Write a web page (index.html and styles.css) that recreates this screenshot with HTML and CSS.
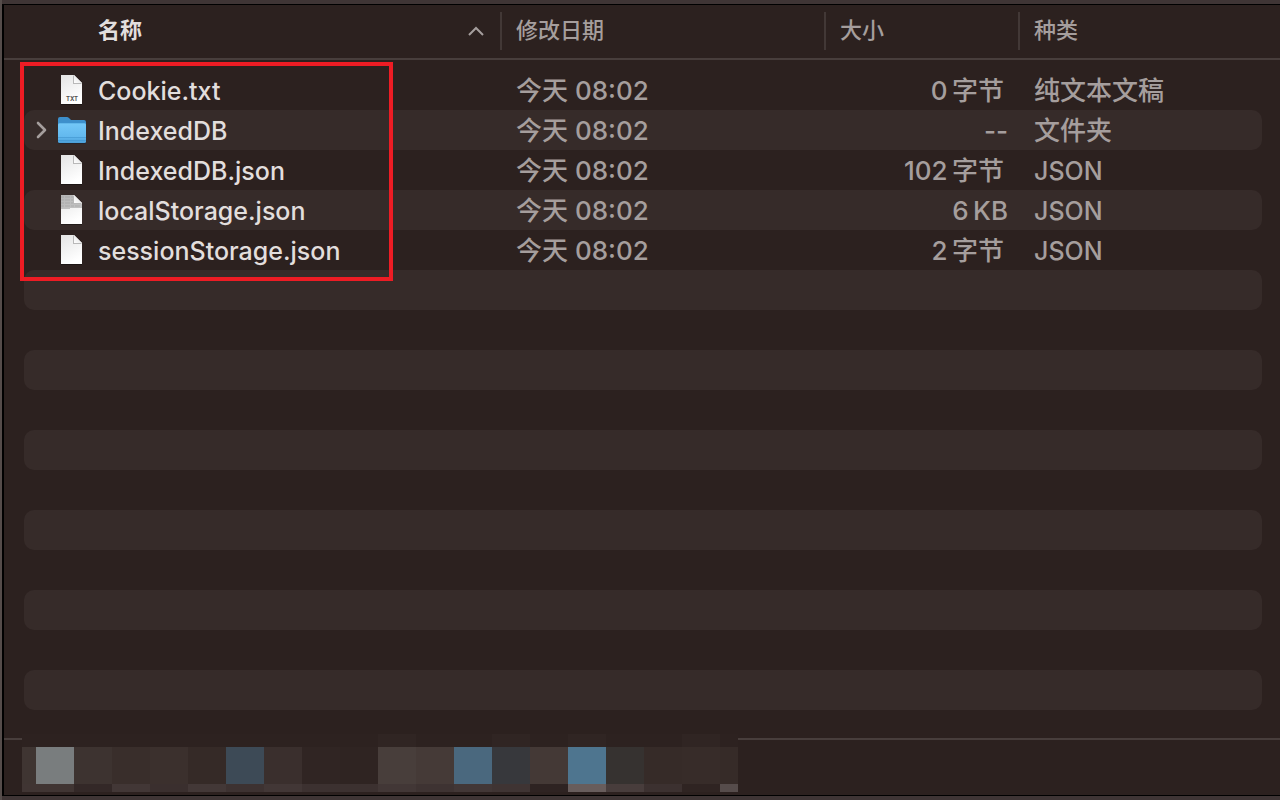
FILE: index.html
```
<!DOCTYPE html>
<html lang="zh-CN">
<head>
    <meta charset="utf-8">
    <title>IndexedDB</title>
    <link rel="stylesheet" href="styles.css">
</head>
<body>
    <svg class="defs" aria-hidden="true">
        <defs>
            <linearGradient id="paper" x1="0" y1="0" x2="0.4" y2="1">
                <stop offset="0" stop-color="#e4e4e4"/>
                <stop offset="1" stop-color="#ffffff"/>
            </linearGradient>
            <linearGradient id="fold" x1="0" y1="1" x2="1" y2="0">
                <stop offset="0" stop-color="#ffffff"/>
                <stop offset="1" stop-color="#dcdcdc"/>
            </linearGradient>
            <linearGradient id="blue" x1="0" y1="0" x2="0" y2="1">
                <stop offset="0" stop-color="#74c8f8"/>
                <stop offset="0.7" stop-color="#62b8ee"/>
                <stop offset="1" stop-color="#4a9fd8"/>
            </linearGradient>
            <symbol id="file" viewBox="0 0 28 32">
                <path d="M3 2h13l8 8v21H3z" fill="#000" opacity="0.35"/>
                <path d="M3 1h13l8 8v21H3z" fill="url(#paper)"/>
                <path d="M15 1v9h9z" fill="#b8b8b8"/>
                <path d="M16 1v8h8z" fill="url(#fold)"/>
            </symbol>
        </defs>
    </svg>
    <main class="window">
        <div class="list">
            <table>
                <thead>
                    <tr>
                        <th class="name" scope="col" aria-sort="ascending">
                            <button class="head">名称
                                <svg class="arrow" width="16" height="10" viewBox="0 0 16 10"><path d="M1 9l7-7 7 7" fill="none" stroke="#a59e9d" stroke-width="2"/></svg>
                            </button>
                        </th>
                        <th class="date" scope="col"><button class="head">修改日期</button></th>
                        <th class="size" scope="col"><button class="head">大小</button></th>
                        <th class="kind" scope="col"><button class="head">种类</button></th>
                    </tr>
                </thead>
                <tbody>
                    <tr>
                        <td><div class="item">
                            <svg class="icon" viewBox="0 0 28 32"><use href="#file"/><text x="14" y="27" text-anchor="middle" class="ext">TXT</text></svg>
                            Cookie.txt
                        </div></td>
                        <td class="date">今天 08:02</td>
                        <td class="size cjk">0&thinsp;字节</td>
                        <td class="kind">纯文本文稿</td>
                    </tr>
                    <tr>
                        <td><div class="item">
                            <button class="toggle" aria-label="展开 IndexedDB">
                                <svg width="12" height="18" viewBox="0 0 12 18"><path d="M2 2l7 7-7 7" fill="none" stroke="#a59e9d" stroke-width="2.6" stroke-linecap="round" stroke-linejoin="round"/></svg>
                            </button>
                            <svg class="icon" viewBox="0 0 28 32">
                                <rect x="0" y="6" width="28" height="24" rx="2" fill="#17202a" opacity="0.5"/>
                                <path d="M0 5q0-2 2-2h7q1 0 2 1l2 2h13q2 0 2 2v7H0z" fill="#3d8fcb"/>
                                <rect x="0" y="9" width="28" height="20" rx="1.5" fill="url(#blue)"/>
                                <path d="M0 9h28M0 23.500h28M0 26.500h28" stroke="#3f94ce" stroke-width="1" opacity="0.6"/>
                            </svg>
                            IndexedDB
                        </div></td>
                        <td class="date">今天 08:02</td>
                        <td class="size">--</td>
                        <td class="kind">文件夹</td>
                    </tr>
                    <tr>
                        <td><div class="item">
                            <svg class="icon" viewBox="0 0 28 32"><use href="#file"/></svg>
                            IndexedDB.json
                        </div></td>
                        <td class="date">今天 08:02</td>
                        <td class="size cjk">102&thinsp;字节</td>
                        <td class="kind latin">JSON</td>
                    </tr>
                    <tr>
                        <td><div class="item">
                            <svg class="icon" viewBox="0 0 28 32">
                                <use href="#file"/>
                                <path d="M3 1h12v9h9v4H12v1H3z" fill="#8d8d8d" opacity="0.5"/>
                                <path d="M3 3h12M3 6h12M3 9h12M3 12h19" stroke="#777" stroke-width="1" stroke-dasharray="3 1 5 1" opacity="0.25"/>
                            </svg>
                            localStorage.json
                        </div></td>
                        <td class="date">今天 08:02</td>
                        <td class="size">6&thinsp;KB</td>
                        <td class="kind latin">JSON</td>
                    </tr>
                    <tr>
                        <td><div class="item">
                            <svg class="icon" viewBox="0 0 28 32"><use href="#file"/></svg>
                            sessionStorage.json
                        </div></td>
                        <td class="date">今天 08:02</td>
                        <td class="size cjk">2&thinsp;字节</td>
                        <td class="kind latin">JSON</td>
                    </tr>
                    <tr><td colspan="4"></td></tr>
                    <tr><td colspan="4"></td></tr>
                    <tr><td colspan="4"></td></tr>
                    <tr><td colspan="4"></td></tr>
                    <tr><td colspan="4"></td></tr>
                    <tr><td colspan="4"></td></tr>
                    <tr><td colspan="4"></td></tr>
                    <tr><td colspan="4"></td></tr>
                    <tr><td colspan="4"></td></tr>
                    <tr><td colspan="4"></td></tr>
                    <tr><td colspan="4"></td></tr>
                </tbody>
            </table>
            <div class="marker"></div>
        </div>
        <footer class="pathbar">
            <!-- path is masked out with a mosaic -->
            <svg class="mosaic" width="716" height="58" viewBox="0 0 716 58" shape-rendering="crispEdges" aria-hidden="true">
                <rect width="716" height="58" fill="#2d2220"/>
                <g fill="#302523">
                    <rect x="356" y="0" width="38" height="13"/>
                    <rect x="470" y="0" width="38" height="13"/>
                    <rect x="546" y="0" width="38" height="13"/>
                    <rect x="660" y="0" width="38" height="13"/>
                </g>
                <rect x="0" y="13" width="14" height="37" fill="#3f3532"/>
                <rect x="14" y="13" width="38" height="37" fill="#797d7e"/>
                <rect x="52" y="13" width="38" height="37" fill="#3d3330"/>
                <rect x="90" y="13" width="38" height="37" fill="#392e2b"/>
                <rect x="128" y="13" width="38" height="37" fill="#3b302d"/>
                <rect x="166" y="13" width="38" height="37" fill="#352a27"/>
                <rect x="204" y="13" width="38" height="37" fill="#3d4a56"/>
                <rect x="242" y="13" width="38" height="37" fill="#3a2f2d"/>
                <rect x="280" y="13" width="38" height="37" fill="#302523"/>
                <rect x="318" y="13" width="38" height="37" fill="#2f2422"/>
                <rect x="356" y="13" width="38" height="37" fill="#483e3b"/>
                <rect x="394" y="13" width="38" height="37" fill="#453a37"/>
                <rect x="432" y="13" width="38" height="37" fill="#4a687e"/>
                <rect x="470" y="13" width="38" height="37" fill="#37383c"/>
                <rect x="508" y="13" width="38" height="37" fill="#443936"/>
                <rect x="546" y="13" width="38" height="37" fill="#4e758f"/>
                <rect x="584" y="13" width="38" height="37" fill="#363230"/>
                <rect x="622" y="13" width="38" height="37" fill="#362b28"/>
                <rect x="660" y="13" width="38" height="37" fill="#372c29"/>
                <rect x="698" y="13" width="18" height="37" fill="#362b28"/>
                <rect x="0" y="50" width="52" height="8" fill="#403533"/>
                <rect x="52" y="50" width="38" height="8" fill="#332827"/>
                <rect x="90" y="50" width="38" height="8" fill="#423736"/>
                <rect x="128" y="50" width="38" height="8" fill="#3a2f2e"/>
                <rect x="166" y="50" width="38" height="8" fill="#433837"/>
                <rect x="204" y="50" width="38" height="8" fill="#3d3231"/>
                <rect x="242" y="50" width="38" height="8" fill="#423736"/>
                <rect x="280" y="50" width="76" height="8" fill="#3c3130"/>
                <rect x="356" y="50" width="38" height="8" fill="#423736"/>
                <rect x="394" y="50" width="38" height="8" fill="#3e3332"/>
                <rect x="432" y="50" width="38" height="8" fill="#423736"/>
                <rect x="470" y="50" width="38" height="8" fill="#3f3433"/>
                <rect x="508" y="50" width="38" height="8" fill="#2e2322"/>
                <rect x="546" y="50" width="38" height="8" fill="#685d5c"/>
                <rect x="584" y="50" width="38" height="8" fill="#483d3c"/>
                <rect x="622" y="50" width="38" height="8" fill="#3c3130"/>
                <rect x="660" y="50" width="38" height="8" fill="#2f2422"/>
                <rect x="698" y="50" width="18" height="8" fill="#564c4b"/>
            </svg>
        </footer>
    </main>
</body>
</html>
```
FILE: styles.css
```
* {
    box-sizing: border-box;
}
body {
    margin: 0;
    height: 100vh;
    display: flex;
    flex-direction: column;
    padding: 4px 0;
    border-left: 2px solid #554c4a;
    background-color: #3f3535;
    color: #a59e9d;
    font-family: Inter, "Noto Sans CJK SC", sans-serif;
    font-size: 26px;
    font-weight: 500;
}
.defs {
    position: absolute;
    width: 0;
    height: 0;
}
.window {
    flex: 1;
    display: flex;
    flex-direction: column;
    background-color: #2c211f;
    border: 1px solid #000;
    border-width: 1px 0 1px 2px;
}
.list {
    flex: 1;
    position: relative;
}
table {
    width: 100%;
    table-layout: fixed;
    border-collapse: separate;
    border-spacing: 0;
}
/* gutters on both sides of every row */
tr::before,
tr::after {
    content: "";
    display: table-cell;
    width: 20px;
}
tr::after {
    width: 18px;
}
th,
thead tr::before,
thead tr::after {
    padding: 7px 0 8px;
    border-bottom: 2px solid #483e3c;
}
th.name {
    width: 476px;
}
th.date {
    width: 324px;
}
th.size {
    width: 194px;
}
.head {
    display: flex;
    align-items: center;
    justify-content: space-between;
    width: 100%;
    height: 38px;
    padding: 0 16px 6px 14px;
    border: 0;
    border-left: 2px solid #423836;
    background: none;
    color: inherit;
    font: inherit;
    font-size: 22px;
    font-weight: 500;
}
.name .head {
    padding-left: 74px;
    border-left: 0;
    color: #e2dedd;
    font-weight: 700;
}
.arrow {
    margin-top: 6px;
}
tbody::before {
    content: "";
    display: block;
    height: 10px;
}
td {
    height: 40px;
    padding: 2px 0 0;
    line-height: 38px;
    white-space: nowrap;
}
td:first-child {
    border-radius: 10px 0 0 10px;
}
td:last-child {
    border-radius: 0 10px 10px 0;
}
td[colspan] {
    border-radius: 10px;
}
tbody tr:nth-child(even) td {
    background-color: #362b29;
}
.item {
    display: flex;
    align-items: flex-start;
    height: 38px;
    padding-left: 34px;
    color: #e2dedd;
    font-size: 25px;
}
.icon {
    width: 28px;
    height: 32px;
    margin: 2px 12px 0 0;
}
.ext {
    fill: #555;
    font-size: 6px;
    font-weight: 700;
}
.toggle {
    display: flex;
    width: 12px;
    margin: 9px 10px 0 -22px;
    padding: 0;
    border: 0;
    background: none;
}
td.date,
td.kind {
    padding-left: 16px;
}
td.latin {
    font-size: 25px;
}
td.size {
    padding-right: 10px;
    text-align: right;
}
td.size.cjk {
    padding-right: 14px;
}
.marker {
    position: absolute;
    top: 57px;
    left: 16px;
    width: 373px;
    height: 219px;
    border: 4px solid #ed1c24;
}
.pathbar {
    border-top: 2px solid #483e3c;
    padding: 0 18px 3px;
}
.mosaic {
    display: block;
    margin-top: -6px;
}
```
